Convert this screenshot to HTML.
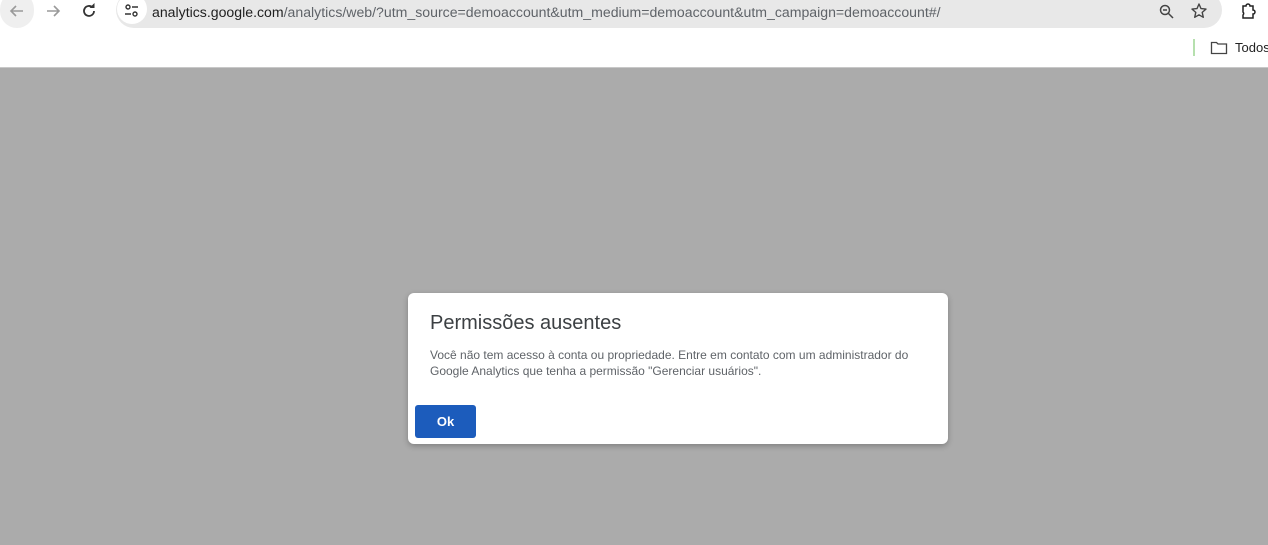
<!DOCTYPE html>
<html><head><meta charset="utf-8"><style>
*{margin:0;padding:0;box-sizing:border-box}
body{width:1268px;height:545px;overflow:hidden;background:#ababab;font-family:"Liberation Sans",Arial,sans-serif;position:relative}
.top{position:absolute;left:0;top:0;width:1268px;height:68px;background:#fff;border-bottom:1px solid #c8c8c8}
.pill{position:absolute;left:116px;top:-8px;width:1106px;height:36px;background:#e8e8e8;border-radius:18px}
.url{position:absolute;left:152px;top:4px;font-size:14.1px;color:#5f6368;white-space:nowrap}
.url b{font-weight:normal;color:#1f1f1f}
.back{position:absolute;left:0;top:-8px;width:34px;height:36px;background:#efefef;border-radius:18px}
.tune{position:absolute;left:117px;top:-6px;width:30px;height:30px;background:#fff;border-radius:15px}
.dlg{position:absolute;left:408px;top:293px;width:540px;height:151px;background:#fff;border-radius:6px;box-shadow:0 2px 6px rgba(0,0,0,.25)}
.dlg h1{position:absolute;left:22px;top:19px;font-size:20px;font-weight:normal;color:#3c4043}
.dlg p{position:absolute;left:22px;top:54px;width:500px;font-size:12px;line-height:16px;color:#5f6368}
.ok{position:absolute;left:7px;top:112px;width:61px;height:33px;background:#1c5cbc;border-radius:3px;color:#fff;font-weight:bold;font-size:13px;text-align:center;line-height:33px}
</style></head><body>
<div class="top">
<div class="back"></div>
<svg style="position:absolute;left:8px;top:3px" width="18" height="16" viewBox="0 0 18 16"><path d="M15 8H3M8 3L3 8l5 5" stroke="#9a9a9a" stroke-width="1.6" fill="none"/></svg>
<svg style="position:absolute;left:44px;top:3px" width="18" height="16" viewBox="0 0 18 16"><path d="M3 8h12M10 3l5 5-5 5" stroke="#9a9a9a" stroke-width="1.6" fill="none"/></svg>
<svg style="position:absolute;left:80px;top:2px" width="18" height="18" viewBox="0 0 18 18"><path d="M14 9a5 5 0 1 1-1.5-3.6" stroke="#333" stroke-width="1.8" fill="none"/><path d="M14.5 1v5h-5z" fill="#333"/></svg>
<div class="pill"></div>
<div class="tune"></div>
<svg style="position:absolute;left:123px;top:3px" width="18" height="16" viewBox="0 0 18 16"><circle cx="5" cy="4" r="2" stroke="#333" stroke-width="1.4" fill="none"/><path d="M9 4h6M2 11h6" stroke="#333" stroke-width="1.4"/><circle cx="12" cy="11" r="2" stroke="#333" stroke-width="1.4" fill="none"/></svg>
<div class="url"><b>analytics.google.com</b>/analytics/web/?utm_source=demoaccount&amp;utm_medium=demoaccount&amp;utm_campaign=demoaccount#/</div>
<svg style="position:absolute;left:1158px;top:3px" width="18" height="18" viewBox="0 0 18 18"><circle cx="7" cy="7" r="4.5" stroke="#444" stroke-width="1.5" fill="none"/><path d="M10.5 10.5l4.5 4.5M5 7h4" stroke="#444" stroke-width="1.5"/></svg>
<svg style="position:absolute;left:1190px;top:2px" width="18" height="18" viewBox="0 0 18 18"><path d="M9 2l2 4.6 5 .5-3.8 3.3 1.1 4.9L9 12.8 4.7 15.3l1.1-4.9L2 7.1l5-.5z" stroke="#444" stroke-width="1.4" fill="none" stroke-linejoin="round"/></svg>
<svg style="position:absolute;left:1240px;top:2px" width="18" height="18" viewBox="0 0 18 18"><path d="M3 4h3a2 2 0 0 1 4 0h3v4a2 2 0 0 1 0 4v4H3v-3a2 2 0 0 0 0-3z" stroke="#222" stroke-width="1.5" fill="none"/></svg>
<div style="position:absolute;left:1193px;top:39px;width:2px;height:17px;background:#b6e0ae"></div>
<svg style="position:absolute;left:1210px;top:40px" width="18" height="15" viewBox="0 0 18 15"><path d="M1.5 2.5h5l1.5 1.5h8.5v9.5h-15z" stroke="#444" stroke-width="1.3" fill="none"/></svg>
<div style="position:absolute;left:1235px;top:40px;font-size:13px;color:#222">Todos</div>
</div>
<div class="dlg">
<h1>Permissões ausentes</h1>
<p>Você não tem acesso à conta ou propriedade. Entre em contato com um administrador do Google Analytics que tenha a permissão "Gerenciar usuários".</p>
<div class="ok">Ok</div>
</div>
</body></html>
